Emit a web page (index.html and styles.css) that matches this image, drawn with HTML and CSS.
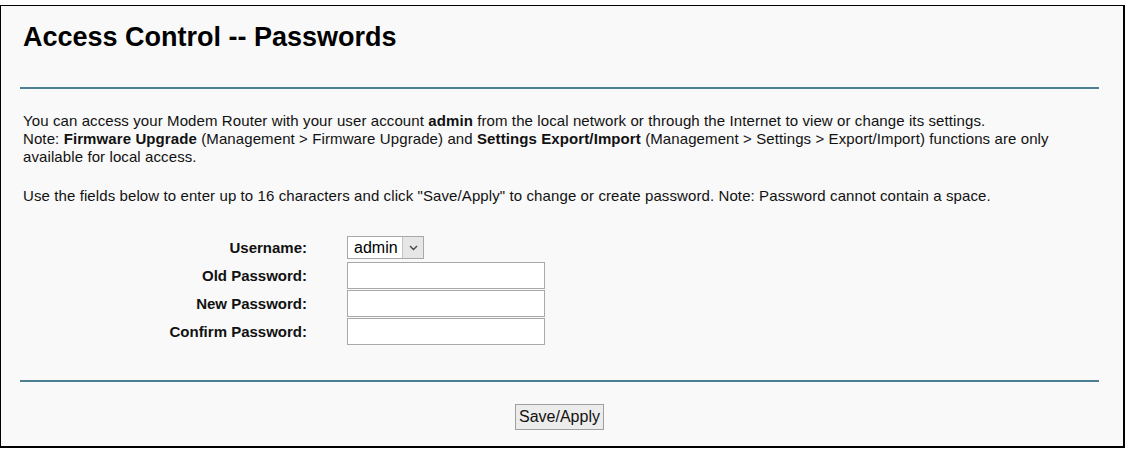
FILE: index.html
```html
<!DOCTYPE html>
<html>
<head>
<meta charset="utf-8">
<link rel="stylesheet" href="styles.css">
</head>
<body>
<div class="frame">
  <h1 class="title">Access Control -- Passwords</h1>
  <div class="rule"></div>
  <div class="intro">
    <p class="para">You can access your Modem Router with your user account <b>admin</b> from the local network or through the Internet to view or change its settings.<br>Note: <b>Firmware Upgrade</b> (Management &gt; Firmware Upgrade) and <b>Settings Export/Import</b> (Management &gt; Settings &gt; Export/Import) functions are only available for local access.</p>
    <p class="para">Use the fields below to enter up to 16 characters and click "Save/Apply" to change or create password. Note: Password cannot contain a space.</p>
  </div>
  <div class="form">
    <div class="label">Username:</div>
    <div class="field">
      <div class="select"><span class="select-text">admin</span><span class="select-arrow"><svg width="9" height="6" viewBox="0 0 9 6"><path d="M1 1 L4.5 4.5 L8 1" fill="none" stroke="#444" stroke-width="1.4"/></svg></span></div>
    </div>
    <div class="label">Old Password:</div>
    <div class="field"><input class="input" type="password"></div>
    <div class="label">New Password:</div>
    <div class="field"><input class="input" type="password"></div>
    <div class="label">Confirm Password:</div>
    <div class="field"><input class="input" type="password"></div>
  </div>
  <div class="rule rule-bottom"></div>
  <div class="actions"><button class="btn" type="button">Save/Apply</button></div>
</div>
</body>
</html>
```
FILE: styles.css
```css
html, body {
  margin: 0;
  padding: 0;
  background: #ffffff;
}
body {
  font-family: "Liberation Sans", Arial, sans-serif;
  color: #000;
}
.frame {
  margin-top: 5px;
  width: 1122px;
  height: 440px;
  box-sizing: content-box;
  border-top: 1px solid #000;
  border-left: 1px solid #000;
  border-right: 2px solid #000;
  border-bottom: 2px solid #000;
  background: #f9f9f9;
  display: flex;
  flex-direction: column;
}
.title {
  margin: 17px 0 0 22px;
  font-size: 27px;
  line-height: 28px;
  font-weight: bold;
}
.rule {
  margin: 36px 24px 0 19px;
  height: 2px;
  background: #4c7f93;
}
.intro {
  margin: 23px 30px 0 22px;
  font-size: 15px;
  line-height: 18px;
  letter-spacing: 0.1px;
  color: #111;
}
.para {
  margin: 0 0 21px 0;
}
.form {
  display: grid;
  grid-template-columns: 286px 198px;
  column-gap: 40px;
  row-gap: 1px;
  margin: 8px 0 0 20px;
  align-items: center;
}
.label {
  text-align: right;
  font-weight: bold;
  font-size: 15px;
  color: #111;
}
.field {
  display: flex;
  align-items: center;
  height: 27px;
}
.select {
  display: flex;
  width: 75px;
  height: 21px;
  border: 1px solid #a9a9a9;
  background: #fff;
}
.select-text {
  flex: 1;
  font-size: 16px;
  line-height: 21px;
  padding-left: 6px;
}
.select-arrow {
  width: 20px;
  border-left: 1px solid #c4c4c4;
  background: #e6e6e6;
  display: flex;
  align-items: center;
  justify-content: center;
}
.input {
  width: 198px;
  height: 27px;
  box-sizing: border-box;
  border: 1px solid #a9a9a9;
  background: #fff;
  margin: 0;
  padding: 0 4px;
}
.rule-bottom {
  margin-top: 35px;
}
.actions {
  display: flex;
  justify-content: center;
  margin-top: 22px;
  padding-right: 5px;
}
.btn {
  font-family: "Liberation Sans", Arial, sans-serif;
  font-size: 16px;
  height: 26px;
  padding: 0 3px;
  border: 1px solid #a0a0a0;
  background: #ececec;
  color: #111;
  border-radius: 0;
}
```
